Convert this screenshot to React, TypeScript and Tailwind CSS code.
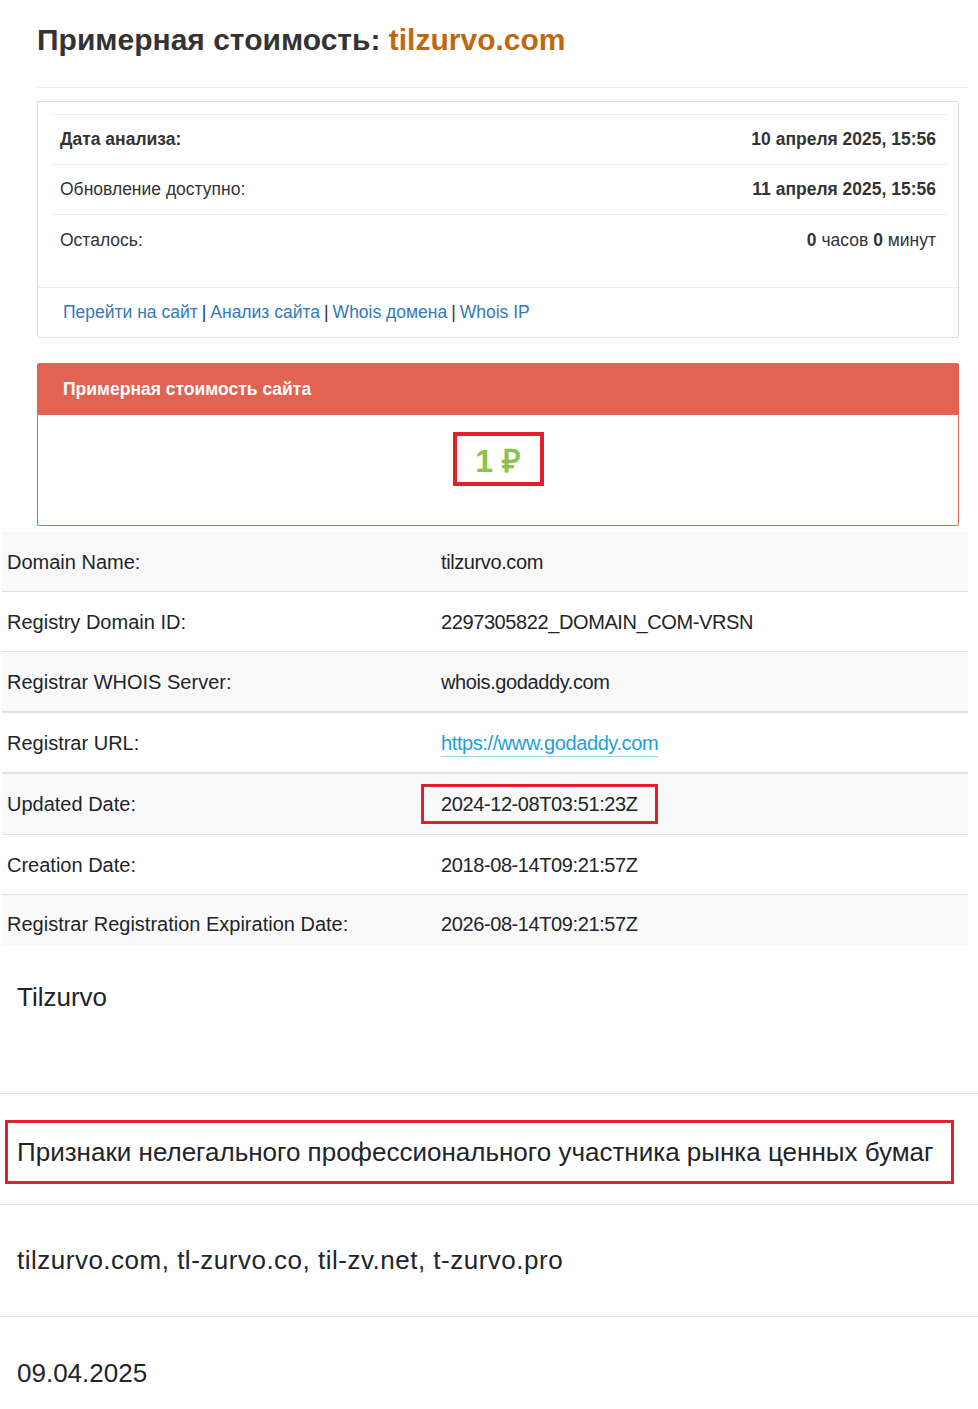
import React from 'react';

const INFO = [
  { label: 'Дата анализа:', value: <b>10 апреля 2025, 15:56</b>, bold: true },
  { label: 'Обновление доступно:', value: <b>11 апреля 2025, 15:56</b> },
  {
    label: 'Осталось:',
    value: (
      <>
        <b>0</b> часов <b>0</b> минут
      </>
    ),
  },
];

const WHOIS = [
  { label: 'Domain Name:', value: 'tilzurvo.com', h: 'h-[60px] items-center' },
  { label: 'Registry Domain ID:', value: '2297305822_DOMAIN_COM-VRSN', h: 'h-[60px] items-center' },
  { label: 'Registrar WHOIS Server:', value: 'whois.godaddy.com', h: 'h-[61px] items-center' },
  { label: 'Registrar URL:', value: 'https://www.godaddy.com', link: true, h: 'h-[61px] items-center' },
  { label: 'Updated Date:', value: '2024-12-08T03:51:23Z', boxed: true, h: 'h-[61px] items-center' },
  { label: 'Creation Date:', value: '2018-08-14T09:21:57Z', h: 'h-[60px] items-center' },
  { label: 'Registrar Registration Expiration Date:', value: '2026-08-14T09:21:57Z', h: 'h-[50px] items-start pt-[14px]' },
];

const App: React.FC = () => {
  return (
    <div className="w-[978px] bg-white pb-6">
      {/* Header + estimate card */}
      <div className="pl-[37px] pr-[19px] font-['Liberation_Sans',Arial,sans-serif] text-[#333]">
        <h1 className="pt-[22px] pb-[30px] text-[30px] font-bold leading-[35px] text-[#333]">
          Примерная стоимость: <span className="text-[#c0680f]">tilzurvo.com</span>
        </h1>
        <div className="mr-[-9px] border-t border-[#eee]" />

        <div className="mt-[13px] border border-[#ddd] rounded-[2px]">
          <div className="px-[12px] pt-[12px] pb-[22px]">
            <div className="border-t border-[#eee]">
              {INFO.map((r, i) => (
                <div
                  key={i}
                  className={`flex h-[50px] items-center justify-between px-[10px] text-[17.5px] ${
                    i < INFO.length - 1 ? 'border-b border-[#eee]' : ''
                  }`}
                >
                  <span className={r.bold ? 'font-bold' : ''}>{r.label}</span>
                  <span>{r.value}</span>
                </div>
              ))}
            </div>
          </div>
          <div className="flex h-[50px] items-center border-t border-[#eee] px-[25px] text-[17.5px] text-[#333]">
            <a className="text-[#337ab7]">Перейти на сайт</a>
            <span className="mx-[4px]">|</span>
            <a className="text-[#337ab7]">Анализ сайта</a>
            <span className="mx-[4px]">|</span>
            <a className="text-[#337ab7]">Whois домена</a>
            <span className="mx-[4px]">|</span>
            <a className="text-[#337ab7]">Whois IP</a>
          </div>
        </div>

        <div className="mt-[25px] border border-[#e36352] rounded-[2px]">
          <div className="flex h-[51px] items-center bg-[#e36352] px-[25px] text-[17.5px] font-bold text-white">
            Примерная стоимость сайта
          </div>
          <div className="flex h-[110px] justify-center pt-[17px]">
            <div className="flex h-[54px] w-[91px] items-center justify-center border-[4px] border-[#e2202b] pt-[4px] text-[32px] font-bold text-[#8bc34a]">
              1 ₽
            </div>
          </div>
        </div>
      </div>

      {/* Whois table */}
      <div className="mt-[6px] ml-[2px] w-[966px] font-['Liberation_Sans',Arial,sans-serif] text-[20px] text-[#212529]">
        {WHOIS.map((r, i) => (
          <div
            key={i}
            className={`grid grid-cols-[439px_1fr] ${r.h} ${i % 2 === 0 ? 'bg-[#f9f9f9]' : 'bg-white'} ${
              i < WHOIS.length - 1 ? (i === 2 || i === 3 ? 'border-b-2 border-[#dee2e6]' : 'border-b border-[#dee2e6]') : ''
            }`}
          >
            <div className="pl-[5px]">{r.label}</div>
            <div className="tracking-[-0.4px]">
              {r.link ? (
                <a className="border-b border-[#9ed3ef] pb-[2px] text-[#1e9fdc]">{r.value}</a>
              ) : r.boxed ? (
                <span className="-ml-[20px] inline-block border-[3px] border-[#e2202b] px-[17px] py-[2px]">{r.value}</span>
              ) : (
                r.value
              )}
            </div>
          </div>
        ))}
      </div>

      {/* Bottom details */}
      <div className="font-['Liberation_Sans',Arial,sans-serif] text-[26px] text-[#212529]">
        <div className="h-[149px] border-b border-[#e5e5e5] px-[17px] pt-[33px]">Tilzurvo</div>
        <div className="h-[111px] border-b border-[#e5e5e5] pl-[5px] pr-[24px] pt-[26px]">
          <div className="flex h-[64px] items-center border-[3px] border-[#e2202b] px-[9px]">
            Признаки нелегального профессионального участника рынка ценных бумаг
          </div>
        </div>
        <div className="flex h-[112px] items-center border-b border-[#e5e5e5] px-[17px] tracking-[0.5px]">
          tilzurvo.com, tl-zurvo.co, til-zv.net, t-zurvo.pro
        </div>
        <div className="flex h-[112px] items-center px-[17px]">09.04.2025</div>
      </div>
    </div>
  );
};

export default App;
